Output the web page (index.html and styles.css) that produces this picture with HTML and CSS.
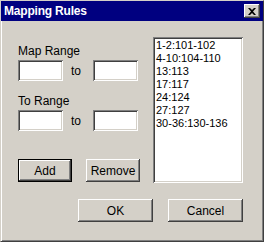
FILE: index.html
```html
<!DOCTYPE html>
<html lang="en">
<head>
	<meta charset="UTF-8">
	<title>Mapping Rules</title>
	<link rel="stylesheet" href="styles.css">
</head>
<body>
	<div class="window">
		<!--标题栏-->
		<div class="titlebar">
			<span class="title">Mapping Rules</span>
			<a href="#" class="close">
				<svg width="8" height="7" viewBox="0 0 8 7"><path d="M0 0h2l2 2 2-2h2L5 3.5 8 7H6L4 5 2 7H0l3-3.5z" fill="#000"/></svg>
			</a>
		</div>

		<div class="body">
			<div class="main">
				<div class="left">
					<div class="label first">Map Range</div>
					<div class="range">
						<input type="text" class="field">
						<span class="to">to</span>
						<input type="text" class="field">
					</div>
					<div class="label">To Range</div>
					<div class="range">
						<input type="text" class="field">
						<span class="to">to</span>
						<input type="text" class="field">
					</div>
					<div class="actions">
						<button class="btn default small">Add</button>
						<button class="btn small">Remove</button>
					</div>
				</div>
				<ul class="rules">
					<li>1-2:101-102</li>
					<li>4-10:104-110</li>
					<li>13:113</li>
					<li>17:117</li>
					<li>24:124</li>
					<li>27:127</li>
					<li>30-36:130-136</li>
				</ul>
			</div>
			<div class="footer">
				<button class="btn wide">OK</button>
				<button class="btn wide">Cancel</button>
			</div>
		</div>
	</div>
</body>
</html>
```

FILE: styles.css
```css
*{
	padding: 0;
	margin: 0;
	box-sizing: border-box;
}
body{
	background-color: #d4d0c8;
	font-family: "Liberation Sans", Arial, sans-serif;
	font-size: 11px;
	color: #000;
}
.window{
	width: 264px;
	height: 242px;
	background-color: #d4d0c8;
	border-top: 1px solid #d4d0c8;
	border-left: 1px solid #d4d0c8;
	border-right: 1px solid #404040;
	border-bottom: 1px solid #404040;
	box-shadow: inset 1px 1px #fff, inset -1px -1px #808080;
}
.titlebar{
	height: 20px;
	background-color: #000080;
	display: flex;
	align-items: center;
	justify-content: space-between;
	padding-left: 3px;
	padding-right: 3px;
}
.title{
	color: #fff;
	font-weight: bold;
	font-size: 12px;
	letter-spacing: -0.2px;
}
.close{
	width: 16px;
	height: 14px;
	display: flex;
	align-items: center;
	justify-content: center;
	background-color: #d4d0c8;
	box-shadow: inset -1px -1px #404040, inset 1px 1px #fff, inset -2px -2px #808080;
}
.body{
	padding: 16px 0 0 17px;
}
.main{
	display: flex;
}
.left{
	width: 135px;
}
.label{
	font-size: 12px;
	line-height: 14px;
	height: 14px;
	margin-top: 13px;
	margin-bottom: 2px;
}
.label.first{
	margin-top: 7px;
}
.range{
	display: flex;
	align-items: center;
}
.field{
	width: 45px;
	height: 21px;
	border: none;
	outline: none;
	background-color: #fff;
	box-shadow: inset 1px 1px #808080, inset -1px -1px #fff, inset 2px 2px #404040, inset -2px -2px #d4d0c8;
}
.to{
	width: 30px;
	padding-right: 4px;
	text-align: center;
	font-size: 12px;
}
.actions{
	display: flex;
	gap: 14px;
	margin-top: 28px;
}
.btn{
	border: none;
	background-color: #d4d0c8;
	font-family: "Liberation Sans", Arial, sans-serif;
	font-size: 12px;
	color: #000;
	height: 23px;
	box-shadow: inset -1px -1px #404040, inset 1px 1px #fff, inset -2px -2px #808080;
}
.btn.default{
	box-shadow: inset 0 0 0 1px #000, inset -2px -2px #404040, inset 2px 2px #fff, inset -3px -3px #808080;
}
.btn.small{
	width: 54px;
}
.btn.wide{
	width: 75px;
}
.rules{
	list-style: none;
	width: 90px;
	height: 146px;
	background-color: #fff;
	padding: 2px 0 0 2px;
	box-shadow: inset 1px 1px #808080, inset -1px -1px #fff, inset 2px 2px #404040, inset -2px -2px #d4d0c8;
}
.rules li{
	line-height: 13px;
	padding-left: 1px;
	font-size: 11px;
}
.footer{
	display: flex;
	gap: 15px;
	margin-top: 16px;
	margin-left: 60px;
}
```
